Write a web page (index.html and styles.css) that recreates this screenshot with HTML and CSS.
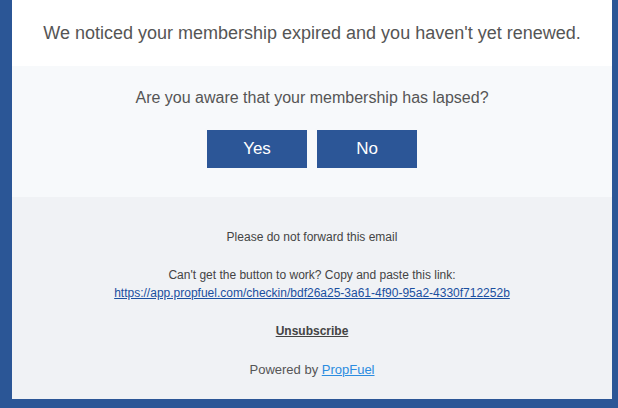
FILE: index.html
```html
<!DOCTYPE html>
<html>
<head>
<meta charset="utf-8">
<link rel="stylesheet" href="styles.css">
</head>
<body>
<div class="email">
  <div class="intro">We noticed your membership expired and you haven't yet renewed.</div>
  <div class="question">
    <p class="q-text">Are you aware that your membership has lapsed?</p>
    <div class="buttons">
      <a class="btn" href="#">Yes</a>
      <a class="btn" href="#">No</a>
    </div>
  </div>
  <div class="footer">
    <p class="f-line">Please do not forward this email</p>
    <p class="f-block">Can't get the button to work? Copy and paste this link:<br><a class="f-link" href="#">https://app.propfuel.com/checkin/bdf26a25-3a61-4f90-95a2-4330f712252b</a></p>
    <p class="f-unsub"><a href="#">Unsubscribe</a></p>
    <p class="f-powered">Powered by <a href="#">PropFuel</a></p>
  </div>
</div>
</body>
</html>
```
FILE: styles.css
```css
html, body {
  margin: 0;
  padding: 0;
  background: #2b5696;
  font-family: "Liberation Sans", Arial, sans-serif;
}
.email {
  margin-left: 12px;
  width: 600px;
  height: 399px;
  display: flex;
  flex-direction: column;
}
.intro {
  background: #ffffff;
  color: #555555;
  font-size: 18px;
  line-height: 24px;
  text-align: center;
  padding: 21px 0;
}
.question {
  background: #f7f9fb;
  padding: 22px 0 29px;
  text-align: center;
}
.q-text {
  margin: 0;
  font-size: 16px;
  line-height: 20px;
  color: #555555;
}
.buttons {
  margin-top: 22px;
  display: flex;
  justify-content: center;
  gap: 10px;
}
.btn {
  width: 100px;
  height: 38px;
  line-height: 37px;
  background: #2c5697;
  color: #ffffff;
  font-size: 17px;
  text-decoration: none;
  display: block;
}
.footer {
  flex: 1;
  background: #f0f2f5;
  text-align: center;
  color: #444444;
  font-size: 12px;
  line-height: 18px;
  padding-top: 31px;
}
.footer p {
  margin: 0;
}
.f-block {
  margin-top: 20px !important;
}
.f-link {
  color: #1a4fa0;
  text-decoration: underline;
}
.f-unsub {
  margin-top: 20px !important;
}
.f-unsub a {
  color: #444444;
  font-weight: bold;
  text-decoration: underline;
}
.f-powered {
  margin-top: 21px !important;
  font-size: 13px;
  color: #555555;
}
.f-powered a {
  color: #2b8ce0;
  text-decoration: underline;
}
```
